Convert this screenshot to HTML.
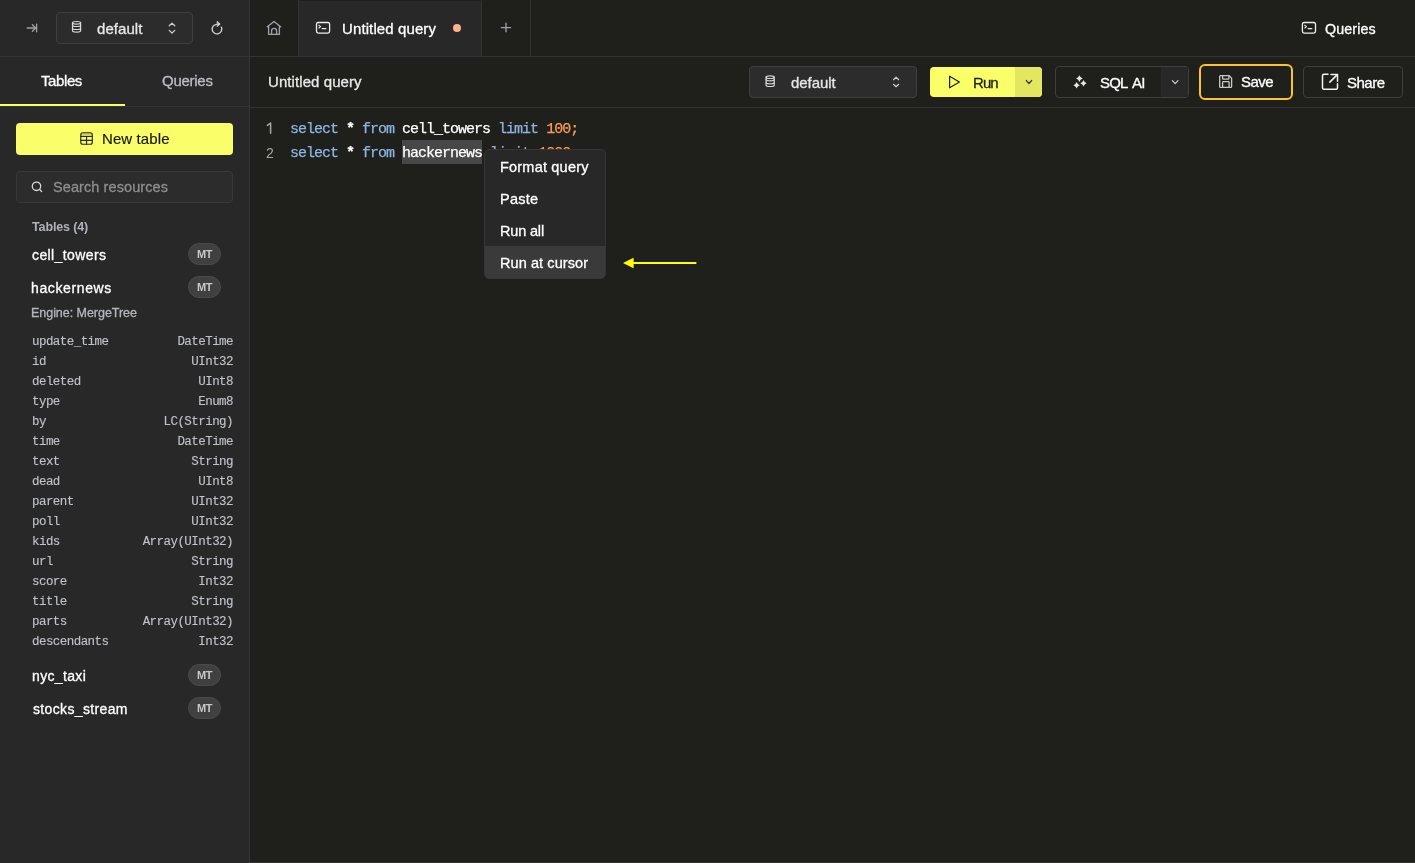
<!DOCTYPE html>
<html><head><meta charset="utf-8">
<style>
*{box-sizing:border-box;margin:0;padding:0}
html,body{width:1415px;height:863px;overflow:hidden;background:#1F1F1C;font-family:"Liberation Sans",sans-serif;color:#fff}
.abs{position:absolute}
.t{position:absolute;white-space:nowrap;line-height:20px;will-change:transform;-webkit-text-stroke:0.3px currentColor}
svg{position:absolute;overflow:visible}
.vline{position:absolute;background:#333333}
.btn{position:absolute;border:1px solid #3F3F3F;border-radius:4px}
.badge{position:absolute;left:188px;width:33px;height:22px;border-radius:11px;background:#404040;border:1px solid #4A4A4A}
.col{position:absolute;left:32px;width:201px;height:20px;font-family:"Liberation Mono",monospace;font-size:12.5px;letter-spacing:-0.551px;color:#C0C3CA;line-height:20px;white-space:nowrap;will-change:transform;-webkit-text-stroke:0.12px currentColor}
.col span{position:absolute;right:0;top:0}
.code{position:absolute;left:290px;font-family:"Liberation Mono",monospace;font-size:15px;letter-spacing:-1.001px;line-height:24px;white-space:pre;color:#fff;will-change:transform;-webkit-text-stroke:0.25px currentColor}
.kw{color:#8DB6E2}
.num{color:#FF9D55}
.ln{position:absolute;left:263px;width:14px;text-align:center;font-family:"Liberation Sans",sans-serif;font-size:14px;line-height:24px;color:#A8A8A8;will-change:transform}
</style></head><body>

<div class="abs" style="left:0;top:0;width:249px;height:863px;background:#282828"></div>
<div class="vline" style="left:249px;top:0;width:1px;height:863px"></div>
<div class="vline" style="left:0;top:56px;width:1415px;height:1px"></div>
<div class="vline" style="left:0;top:106px;width:249px;height:1px"></div>
<div class="vline" style="left:250px;top:107px;width:1165px;height:1px"></div>
<div class="vline" style="left:249px;top:862px;width:1166px;height:1px"></div>

<div class="btn" style="left:56px;top:12px;width:137px;height:32px;background:#2C2C2C"></div>
<div id="default_top" class="t" style="left:97.20px;top:18.61px;font-size:15px;color:#E8E8E8;letter-spacing:0.067px;">default</div>

<div class="vline" style="left:298px;top:0;width:1px;height:56px"></div>
<div class="abs" style="left:299px;top:1px;width:182px;height:55px;background:#282828"></div>
<div class="vline" style="left:481px;top:0;width:1px;height:56px"></div>
<div class="vline" style="left:530px;top:0;width:1px;height:56px"></div>
<div id="untitled_tab" class="t" style="left:342.40px;top:18.90px;font-size:15px;color:#FFFFFF;letter-spacing:0.108px;">Untitled query</div>
<div class="abs" style="left:453px;top:24px;width:8px;height:8px;border-radius:50%;background:#FFB086"></div>
<div id="queries_top" class="t" style="left:1324.80px;top:18.75px;font-size:14.3px;color:#FFFFFF;letter-spacing:0.100px;">Queries</div>

<div id="untitled_tb" class="t" style="left:268.20px;top:71.82px;font-size:15px;color:#EAEAEA;letter-spacing:0.077px;">Untitled query</div>
<div class="btn" style="left:749px;top:66px;width:168px;height:32px;background:#2C2C2C"></div>
<div id="default2" class="t" style="left:791.20px;top:72.71px;font-size:15px;color:#E8E8E8;letter-spacing:-0.067px;">default</div>

<div class="abs" style="left:930px;top:67px;width:112px;height:30px;border-radius:4px;background:#FAFF69;overflow:hidden"><div class="abs" style="left:85px;top:0;width:27px;height:30px;background:#E3E65F"></div></div>
<div id="run" class="t" style="left:973.40px;top:72.82px;font-size:15px;color:#1F1F1C;letter-spacing:-0.900px;">Run</div>

<div class="btn" style="left:1055px;top:66px;width:134px;height:32px;background:#1F1F1C;overflow:hidden"><div class="abs" style="left:105px;top:0;width:28px;height:30px;background:#282828"></div></div>
<div id="sqlai" class="t" style="left:1100.20px;top:72.92px;font-size:15px;color:#FFFFFF;letter-spacing:-0.800px;word-spacing:2.5px;">SQL AI</div>

<div class="abs" style="left:1199px;top:64px;width:94px;height:36px;border:2px solid #FFC12E;border-radius:6px;background:#1F1F1C"></div>
<div id="save" class="t" style="left:1241.20px;top:71.82px;font-size:15px;color:#FFFFFF;letter-spacing:-0.533px;">Save</div>

<div class="btn" style="left:1303px;top:66px;width:100px;height:32px;background:#1F1F1C"></div>
<div id="share" class="t" style="left:1347.40px;top:72.82px;font-size:15px;color:#FFFFFF;letter-spacing:-0.500px;">Share</div>

<div id="tables_tab" class="t" style="left:41.00px;top:70.82px;font-size:15px;color:#FFFFFF;letter-spacing:-0.400px;">Tables</div>
<div id="queries_tab" class="t" style="left:161.60px;top:70.82px;font-size:15px;color:#BCBFC6;letter-spacing:-0.267px;">Queries</div>
<div class="abs" style="left:0;top:104px;width:125px;height:2px;background:#FAFF69"></div>

<div class="abs" style="left:16px;top:123px;width:217px;height:32px;border-radius:4px;background:#FAFF69"></div>
<div id="newtable" class="t" style="left:102.20px;top:129.01px;font-size:15px;color:#151513;letter-spacing:0.100px;-webkit-text-stroke:0.15px currentColor;">New table</div>

<div class="btn" style="left:16px;top:171px;width:217px;height:32px;background:#2C2C2C;border-color:#383838"></div>
<div id="search" class="t" style="left:52.80px;top:176.99px;font-size:14.5px;color:#8E8E8E;letter-spacing:0.093px;">Search resources</div>

<div id="tables4" class="t" style="left:32.40px;top:217.47px;font-size:12.5px;color:#B0B3BA;letter-spacing:-0.133px;font-weight:bold;-webkit-text-stroke:0px;">Tables (4)</div>
<div id="cell_towers" class="t" style="left:32.00px;top:245.15px;font-size:14px;color:#FFFFFF;letter-spacing:0.400px;">cell_towers</div>
<div class="badge" style="top:243px"></div><div id="mt1" class="t" style="left:196.70px;top:244.19px;font-size:11px;color:#C8C8C8;letter-spacing:-0.400px;font-weight:bold;-webkit-text-stroke:0px;">MT</div>
<div id="hackernews" class="t" style="left:31.00px;top:277.96px;font-size:14px;color:#FFFFFF;letter-spacing:0.622px;">hackernews</div>
<div class="badge" style="top:276px"></div><div id="mt2" class="t" style="left:196.70px;top:277.19px;font-size:11px;color:#C8C8C8;letter-spacing:-0.400px;font-weight:bold;-webkit-text-stroke:0px;">MT</div>
<div id="engine" class="t" style="left:31.00px;top:302.68px;font-size:12.5px;color:#B4B7BE;letter-spacing:-0.037px;">Engine: MergeTree</div>
<div class="col" style="top:331.67px">update_time<span>DateTime</span></div>
<div class="col" style="top:351.67px">id<span>UInt32</span></div>
<div class="col" style="top:371.67px">deleted<span>UInt8</span></div>
<div class="col" style="top:391.67px">type<span>Enum8</span></div>
<div class="col" style="top:411.67px">by<span>LC(String)</span></div>
<div class="col" style="top:431.67px">time<span>DateTime</span></div>
<div class="col" style="top:451.67px">text<span>String</span></div>
<div class="col" style="top:471.67px">dead<span>UInt8</span></div>
<div class="col" style="top:491.67px">parent<span>UInt32</span></div>
<div class="col" style="top:511.67px">poll<span>UInt32</span></div>
<div class="col" style="top:531.67px">kids<span>Array(UInt32)</span></div>
<div class="col" style="top:551.67px">url<span>String</span></div>
<div class="col" style="top:571.67px">score<span>Int32</span></div>
<div class="col" style="top:591.67px">title<span>String</span></div>
<div class="col" style="top:611.67px">parts<span>Array(UInt32)</span></div>
<div class="col" style="top:631.67px">descendants<span>Int32</span></div>

<div id="nyc" class="t" style="left:31.60px;top:665.86px;font-size:14px;color:#FFFFFF;letter-spacing:0.343px;">nyc_taxi</div>
<div class="badge" style="top:664px"></div><div id="mt3" class="t" style="left:196.70px;top:665.19px;font-size:11px;color:#C8C8C8;letter-spacing:-0.400px;font-weight:bold;-webkit-text-stroke:0px;">MT</div>
<div id="stocks" class="t" style="left:32.80px;top:698.90px;font-size:14px;color:#FFFFFF;letter-spacing:0.350px;">stocks_stream</div>
<div class="badge" style="top:697px"></div><div id="mt4" class="t" style="left:196.70px;top:698.19px;font-size:11px;color:#C8C8C8;letter-spacing:-0.400px;font-weight:bold;-webkit-text-stroke:0px;">MT</div>

<div class="ln" style="top:140.5px">2</div>
<div class="abs" style="left:402px;top:140px;width:80px;height:24px;background:#474747"></div>
<div class="code" style="top:117.7px"><span class="kw">select</span> <b>*</b> <span class="kw">from</span> cell_towers <span class="kw">limit</span> <span class="num">100;</span></div>
<div class="code" style="top:141.7px"><span class="kw">select</span> <b>*</b> <span class="kw">from</span> hackernews <span class="kw">limit</span> <span class="num">1000;</span></div>

<div class="abs" style="left:484px;top:149px;width:122px;height:130px;background:#282828;border:1px solid #363636;border-radius:5px;overflow:hidden"><div class="abs" style="left:0;top:96px;width:120px;height:33px;background:#3A3A3A"></div></div>
<div id="m1" class="t" style="left:500.00px;top:156.89px;font-size:14.5px;color:#FFFFFF;letter-spacing:0.200px;">Format query</div>
<div id="m2" class="t" style="left:500.00px;top:188.89px;font-size:14.5px;color:#FFFFFF;letter-spacing:0.250px;">Paste</div>
<div id="m3" class="t" style="left:500.00px;top:221.18px;font-size:14.5px;color:#FFFFFF;letter-spacing:-0.167px;">Run all</div>
<div id="m4" class="t" style="left:500.00px;top:252.89px;font-size:14.5px;color:#FFFFFF;letter-spacing:0.083px;">Run at cursor</div>


<svg style="left:0;top:0" width="1415" height="863" viewBox="0 0 1415 863" fill="none" stroke-linecap="round" stroke-linejoin="round">
<path d="M27.2 28H35 M32.4 24.8L35.6 28L32.4 31.2 M36.6 24.2V31.8" stroke="#A0A3AA" stroke-width="1.3"/>
<g stroke="#D8D8D8" stroke-width="1.2"><ellipse cx="770.15" cy="77.2" rx="4.05" ry="1.3"/><path d="M766.1 77.2V85.2Q766.1 86.5 770.15 86.5Q774.2 86.5 774.2 85.2V77.2"/><path d="M766.1 79.6Q766.1 80.9 770.15 80.9Q774.2 80.9 774.2 79.6"/><path d="M766.1 82.6Q766.1 83.9 770.15 83.9Q774.2 83.9 774.2 82.6"/></g>
<g transform="translate(-693.6,-54.4)"><g stroke="#D8D8D8" stroke-width="1.2"><ellipse cx="770.15" cy="77.2" rx="4.05" ry="1.3"/><path d="M766.1 77.2V85.2Q766.1 86.5 770.15 86.5Q774.2 86.5 774.2 85.2V77.2"/><path d="M766.1 79.6Q766.1 80.9 770.15 80.9Q774.2 80.9 774.2 79.6"/><path d="M766.1 82.6Q766.1 83.9 770.15 83.9Q774.2 83.9 774.2 82.6"/></g></g>
<path d="M169.2 25.8L172 23.2L174.8 25.8 M169.2 30.4L172 33L174.8 30.4" stroke="#D0D0D0" stroke-width="1.2"/>
<path d="M893.5 79.7L896.1 77.3L898.7 79.7 M893.5 84.3L896.1 86.7L898.7 84.3" stroke="#D0D0D0" stroke-width="1.2"/>
<path d="M221.35 27.07A4.8 4.8 0 1 1 216.6 24.3" stroke="#D8D8D8" stroke-width="1.3"/>
<path d="M217.2 21.3L220.3 23.9L217.5 26.7Z" fill="#D8D8D8" stroke="#D8D8D8" stroke-width="0.5"/>
<path d="M267.3 26.8L274 21.5L280.7 26.8 M268.6 25.8V34.3H279.4V25.8 M271.6 34.3V30.8A2.5 2.5 0 0 1 276.6 30.8V34.3" stroke="#A0A3AA" stroke-width="1.3"/>
<g stroke="#EEEEEE"><rect x="316.5" y="22.5" width="13.1" height="10.6" rx="1.8" stroke-width="1.3"/><path d="M318.8 25.3L320.6 26.6L318.9 28" stroke-width="1.1"/><path d="M322.2 28.6H325.8" stroke-width="1.3"/></g>
<g transform="translate(985.9,0)"><g stroke="#EEEEEE"><rect x="316.5" y="22.5" width="13.1" height="10.6" rx="1.8" stroke-width="1.3"/><path d="M318.8 25.3L320.6 26.6L318.9 28" stroke-width="1.1"/><path d="M322.2 28.6H325.8" stroke-width="1.3"/></g></g>
<path d="M506 23.1V31.8 M501.3 27.6H510.7" stroke="#A0A3AA" stroke-width="1.3"/>
<path d="M949.6 76.2L959.4 82L949.6 87.8Z" stroke="#1F1F1C" stroke-width="1.2"/>
<path d="M1026.3 80.5L1029 83.5L1031.7 80.5" stroke="#3A3A32" stroke-width="1.2"/>
<g fill="#E8E8E8">
<path d="M1079.4 75.3Q1080.2 77.8 1082.7 78.6Q1080.2 79.4 1079.4 81.9Q1078.6 79.4 1076.1 78.6Q1078.6 77.8 1079.4 75.3Z"/>
<path d="M1083.5 80.1Q1084.3 82.5 1086.7 83.3Q1084.3 84.1 1083.5 86.5Q1082.7 84.1 1080.3 83.3Q1082.7 82.5 1083.5 80.1Z"/>
<path d="M1076.6 82Q1077.4 84.4 1079.8 85.2Q1077.4 86 1076.6 88.4Q1075.8 86 1073.4 85.2Q1075.8 84.4 1076.6 82Z"/>
</g>
<path d="M1172.4 80.6L1175.2 83.6L1178 80.6" stroke="#D0D0D0" stroke-width="1.2"/>
<g stroke="#C8C8C8" stroke-width="1.3"><path d="M1219.7 76.6Q1219.7 75.7 1220.6 75.7H1229.2L1231.6 78.1V86.5Q1231.6 87.4 1230.7 87.4H1220.6Q1219.7 87.4 1219.7 86.5Z"/><path d="M1222.6 75.9V78.2Q1222.6 79.1 1223.5 79.1H1228Q1228.9 79.1 1228.9 78.2V75.9"/><path d="M1222.6 87.2V82.4Q1222.6 81.7 1223.3 81.7H1228.4Q1229.1 81.7 1229.1 82.4V87.2"/></g>
<g stroke="#F4F4F4" stroke-width="1.5"><path d="M1328 74.3H1324Q1322.5 74.3 1322.5 75.8V87.7Q1322.5 89.2 1324 89.2H1336Q1337.5 89.2 1337.5 87.7V83.7"/><path d="M1331 74.4H1337.5V81.3"/><path d="M1337.3 74.6L1329.8 82.1"/></g>
<g stroke="#2A2A20" stroke-width="1.15"><rect x="80.8" y="132.7" width="11.5" height="11.5" rx="2"/><path d="M80.8 136.5H92.3 M80.8 140.4H92.3 M86.55 136.5V144.2"/></g>
<path d="M80.8 134.2Q80.8 132.7 82.8 132.7H90.3Q92.3 132.7 92.3 134.7V136.5H80.8Z" fill="#2A2A20" fill-opacity="0.2" stroke="none"/>
<g stroke="#D8D8D8" stroke-width="1.3"><circle cx="36.5" cy="186.3" r="4.2"/><path d="M39.6 189.4L41.6 191.5"/></g>
<path d="M267.4 125.4L270.6 123V133.2" stroke="#A8A8A8" stroke-width="1.5"/>
<path d="M633 263H695.6" stroke="#FFFF00" stroke-width="2"/>
<path d="M623 263L633.6 257.8V268.2Z" fill="#FFFF00"/>
</svg>
</body></html>
